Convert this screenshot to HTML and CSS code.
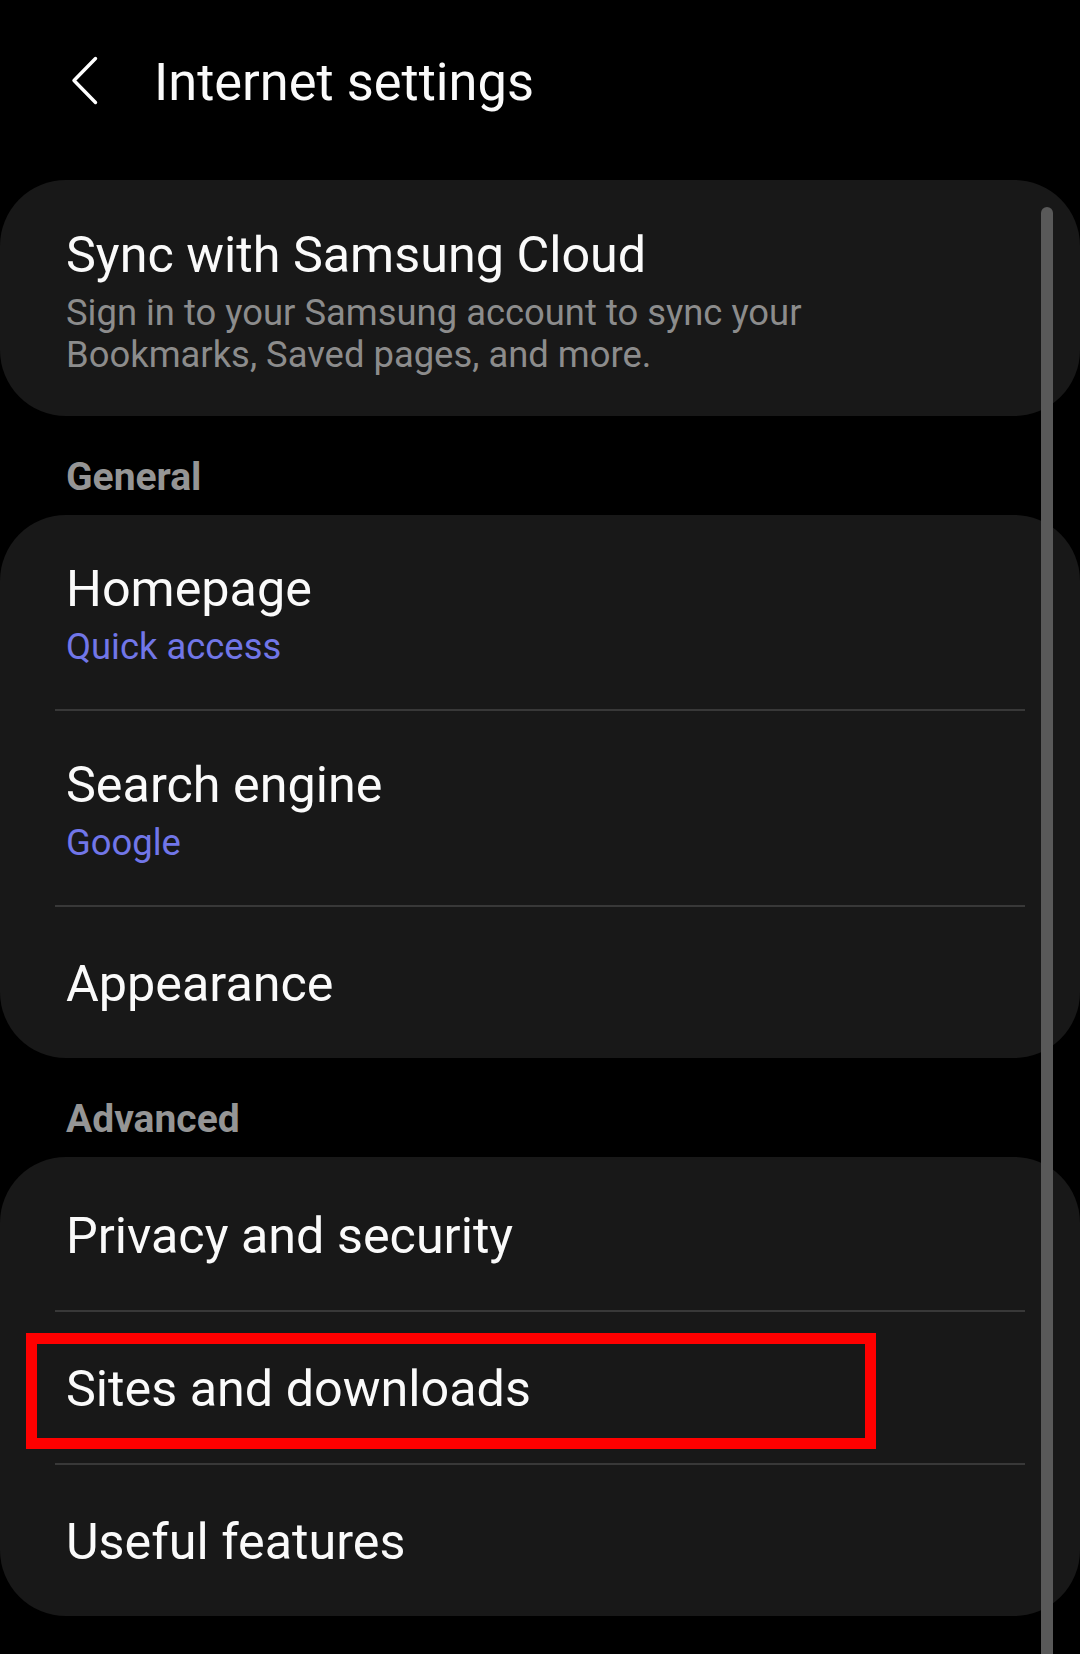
FILE: index.html
```html
<!DOCTYPE html>
<html lang="en">
<head>
<meta charset="utf-8">
<title>Internet settings</title>
<link rel="stylesheet" href="styles.css">
</head>
<body>
<div class="screen">
  <header class="topbar">
    <svg class="back" width="40" height="60" viewBox="0 0 40 60" aria-hidden="true">
      <path d="M33.5 6.5 L12 28.5 L33.5 50.5" fill="none" stroke="#ffffff" stroke-width="3.4" stroke-linecap="round" stroke-linejoin="round"/>
    </svg>
    <h1 class="title">Internet settings</h1>
  </header>

  <section class="card card-sync">
    <div class="item-title">Sync with Samsung Cloud</div>
    <div class="item-sub sub-gray">Sign in to your Samsung account to sync your<br>Bookmarks, Saved pages, and more.</div>
  </section>

  <div class="section-label">General</div>
  <section class="card">
    <div class="row row-two">
      <div class="item-title">Homepage</div>
      <div class="item-sub sub-blue">Quick access</div>
    </div>
    <div class="divider"></div>
    <div class="row row-two">
      <div class="item-title">Search engine</div>
      <div class="item-sub sub-blue">Google</div>
    </div>
    <div class="divider"></div>
    <div class="row row-one">
      <div class="item-title">Appearance</div>
    </div>
  </section>

  <div class="section-label">Advanced</div>
  <section class="card card-adv">
    <div class="row row-one">
      <div class="item-title">Privacy and security</div>
    </div>
    <div class="divider"></div>
    <div class="row row-one row-marked">
      <div class="item-title">Sites and downloads</div>
      <div class="highlight"></div>
    </div>
    <div class="divider"></div>
    <div class="row row-one">
      <div class="item-title">Useful features</div>
    </div>
  </section>

  <div class="scrollbar"></div>
</div>
</body>
</html>
```

FILE: styles.css
```css
* {
  box-sizing: border-box;
}

html, body {
  margin: 0;
  padding: 0;
  background: #000000;
}

body {
  font-family: Roboto, "Noto Sans", "Liberation Sans", sans-serif;
  color: #fafafa;
}

.screen {
  position: relative;
  width: 1080px;
  height: 1654px;
  overflow: hidden;
  background: #000000;
}

.topbar {
  display: flex;
  align-items: center;
  padding: 52px 0 68px 62px;
}

.back {
  display: block;
  flex: none;
}

.title {
  margin: 0 0 0 52px;
  font-size: 52.4px;
  line-height: 60px;
  font-weight: 400;
  color: #fafafa;
}

.card {
  background: #181818;
  border-radius: 66px;
  width: 1080px;
}

.card-sync {
  padding: 46px 66px 40px 66px;
}

.card-adv {
  padding-top: 2px;
}

.item-title {
  font-size: 50.3px;
  line-height: 58px;
  color: #fafafa;
}

.item-sub {
  font-size: 36.4px;
  line-height: 42px;
  margin-top: 8px;
}

.sub-gray {
  color: #8c8c8c;
}

.sub-blue {
  color: #7176e8;
  margin-top: 8px;
}

.section-label {
  padding: 39px 66px 16px 66px;
  font-size: 39px;
  line-height: 44px;
  font-weight: 700;
  color: #959595;
}

.row {
  position: relative;
  padding-left: 66px;
  padding-right: 66px;
}

.row-two {
  padding-top: 45px;
  padding-bottom: 41px;
}

.row-one {
  padding-top: 48px;
  padding-bottom: 45px;
}

.divider {
  height: 2px;
  margin: 0 55px;
  background: #383838;
}

.highlight {
  position: absolute;
  left: 26px;
  top: 21px;
  width: 850px;
  height: 116px;
  border: 11px solid #ff0000;
}

.scrollbar {
  position: absolute;
  left: 1041px;
  top: 207px;
  bottom: 0;
  width: 12px;
  border-radius: 6px 6px 0 0;
  background: #595959;
}
```
